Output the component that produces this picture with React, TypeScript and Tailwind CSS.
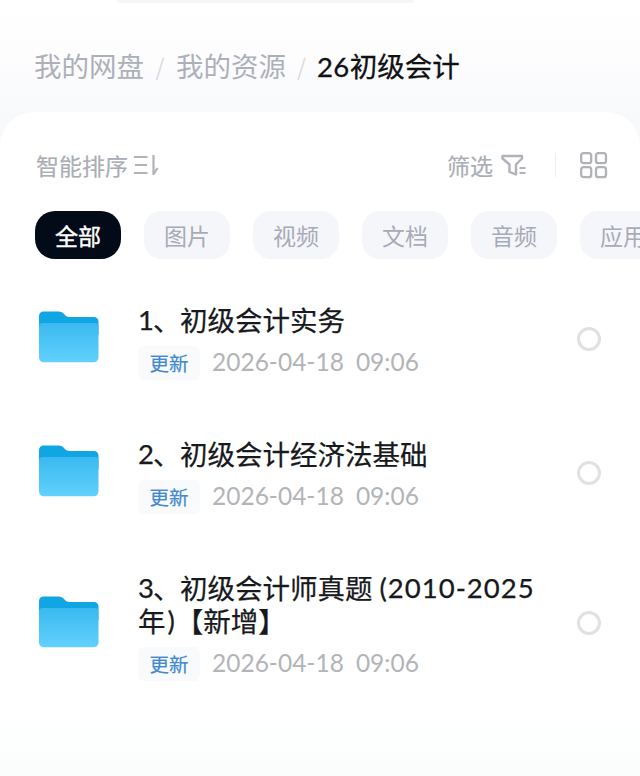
import React from 'react'

interface FileItem {
  index: string
  name: string
  rest?: React.ReactNode
  range?: string
  date: string
  time: string
}

const tabs = ['全部', '图片', '视频', '文档', '音频', '应用']

const files: FileItem[] = [
  { index: '1', name: '初级会计实务', date: '2026-04-18', time: '09:06' },
  { index: '2', name: '初级会计经济法基础', date: '2026-04-18', time: '09:06' },
  {
    index: '3',
    name: '初级会计师真题',
    range: '(2010-2025',
    rest: (
      <>
        <span>年</span>
        <span className="ml-[2px] font-[Lato,sans-serif]">)</span>
        <span className="ml-px">【新增】</span>
      </>
    ),
    date: '2026-04-18',
    time: '09:06',
  },
]

function SortIcon() {
  return (
    <svg className="ml-[5px] h-6 w-[26px]" viewBox="0 0 26 24" fill="none" stroke="#b0b2b8" strokeWidth="2.2">
      <path d="M1 4h13.500M2 12h12M1 20h13.500M20.500 2v20" />
      <path d="M21 20.500l3.500-5.500" />
    </svg>
  )
}

function FilterIcon() {
  return (
    <svg className="ml-[8px] h-6 w-[26px]" viewBox="0 0 26 24" fill="none" stroke="#b0b2b8" strokeWidth="2.4" strokeLinejoin="round">
      <path d="M1.500 3h19.500v2.500l-6 6V21.500l-6.500-2.500v-7.500L1.500 5.500z" />
      <path d="M18.500 15h6M18.500 20h6" strokeWidth="2" />
    </svg>
  )
}

function GridIcon() {
  return (
    <svg className="h-7 w-7" viewBox="0 0 28 28" fill="none" stroke="#b0b2b8" strokeWidth="2.3">
      <rect x="1.200" y="2.200" width="10" height="10" rx="2.500" />
      <rect x="16" y="2.200" width="10" height="10" rx="2.500" />
      <rect x="1.200" y="16.200" width="10" height="10" rx="2.500" />
      <rect x="16" y="16.200" width="10" height="10" rx="2.500" />
    </svg>
  )
}

function FolderIcon() {
  return (
    <svg className="h-[52px] w-[60px] shrink-0" viewBox="0 0 60 52">
      <defs>
        <linearGradient id="folder" x1="0" y1="0" x2="0" y2="1">
          <stop offset="0" stopColor="#3ab9f0" />
          <stop offset="1" stopColor="#62d1fd" />
        </linearGradient>
      </defs>
      <path d="M0 5a4.500 4.500 0 0 1 4.500-4.500H20q2.500 0 4 1.500l3 3Q28.500 6 31 6H55a4.500 4.500 0 0 1 4.500 4.500V24H0z" fill="#10a6e4" />
      <path d="M0 15q0-3 4-3H55.500q4 0 4 3V46.500a4.800 4.800 0 0 1-4.800 4.800H4.800A4.800 4.800 0 0 1 0 46.500z" fill="url(#folder)" />
    </svg>
  )
}

function FileRow({ file }: { file: FileItem }) {
  return (
    <div className="flex items-center">
      <div className="-mt-[9px]">
        <FolderIcon />
      </div>
      <div className="ml-[39px] flex-1">
        <h2 className="text-[27.500px] leading-[33px] text-[#17191d] [-webkit-text-stroke:0.25px_#17191d]">
          <div className="flex h-[33px]">
            <span className="w-[15px] font-[Lato,sans-serif]">{file.index}</span>
            <span className="w-[27px]">、</span>
            <span>{file.name}</span>
            {file.range && <span className="ml-[7px] font-[Lato,sans-serif] tracking-[1px]">{file.range}</span>}
          </div>
          {file.rest && <div className="flex h-[33px]">{file.rest}</div>}
        </h2>
        <div className="mt-[9px] flex h-[35px] items-center">
          <span className="flex h-[34px] w-[62px] items-center justify-center rounded-md bg-[#f8fafc] text-[19.500px] text-[#4389cf] [-webkit-text-stroke:0.2px_#4389cf]">
            更新
          </span>
          <span className="ml-[12px] font-[Lato,sans-serif] text-[24.500px] text-[#b2b4b7]">{file.date}</span>
          <span className="ml-[12px] font-[Lato,sans-serif] text-[24.500px] text-[#b2b4b7]">{file.time}</span>
        </div>
      </div>
      <div className="-mt-[6px] mr-[39px] h-6 w-6 rounded-full border-[3px] border-[#e0e1e2]" />
    </div>
  )
}

export default function App() {
  return (
    <div className="flex h-[776px] w-[640px] flex-col overflow-hidden bg-[#f8f9fb] font-['Noto_Sans_CJK_SC',sans-serif] whitespace-nowrap">
      <header className="h-[112px] shrink-0 bg-linear-to-b from-white via-[#fdfdfe] to-[#f8f9fb]">
        <div className="ml-[117px] h-[3px] w-[297px] rounded-b-full bg-[#f6f6f7]" />
        <nav className="flex h-[126px] items-center pl-[34px] text-[27.500px] text-[#adb0b9]">
          <span>我的网盘</span>
          <span className="w-[32px] text-center text-[23px] text-[#d9dbdf]">/</span>
          <span>我的资源</span>
          <span className="w-[31px] text-center text-[23px] text-[#d9dbdf]">/</span>
          <span className="text-[#101114] [-webkit-text-stroke:0.3px_#101114]">
            <span className="font-[Lato,sans-serif] tracking-[0.4px]">26</span>初级会计
          </span>
        </nav>
      </header>

      <main className="flex-1 rounded-t-[34px] bg-linear-to-b from-white from-90% to-[#fbfdfd]">
        <div className="mt-[37px] flex h-8 items-center pl-[36px] text-[23px] text-[#aaadb5] [-webkit-text-stroke:0.2px_#aaadb5]">
          <span>智能排序</span>
          <SortIcon />
          <span className="ml-auto">筛选</span>
          <FilterIcon />
          <span className="ml-[28px] h-6 w-px bg-[#eceef0]" />
          <div className="mr-[32px] ml-[24px]">
            <GridIcon />
          </div>
        </div>

        <div className="mt-[30px] flex gap-[23px] pl-[35px]">
          {tabs.map((tab, i) => (
            <button
              key={tab}
              className={
                i === 0
                  ? 'h-12 w-[86px] shrink-0 rounded-[20px] bg-[#030a18] text-[23px] text-white [-webkit-text-stroke:0.4px_white]'
                  : 'h-12 w-[86px] shrink-0 rounded-[18px] bg-[#f5f6fa] text-[23px] text-[#a8abb7]'
              }
            >
              {tab}
            </button>
          ))}
        </div>

        <div className="mt-[44px] flex flex-col gap-[57px] pl-[39px]">
          {files.map((file) => (
            <FileRow key={file.index} file={file} />
          ))}
        </div>
      </main>
    </div>
  )
}
